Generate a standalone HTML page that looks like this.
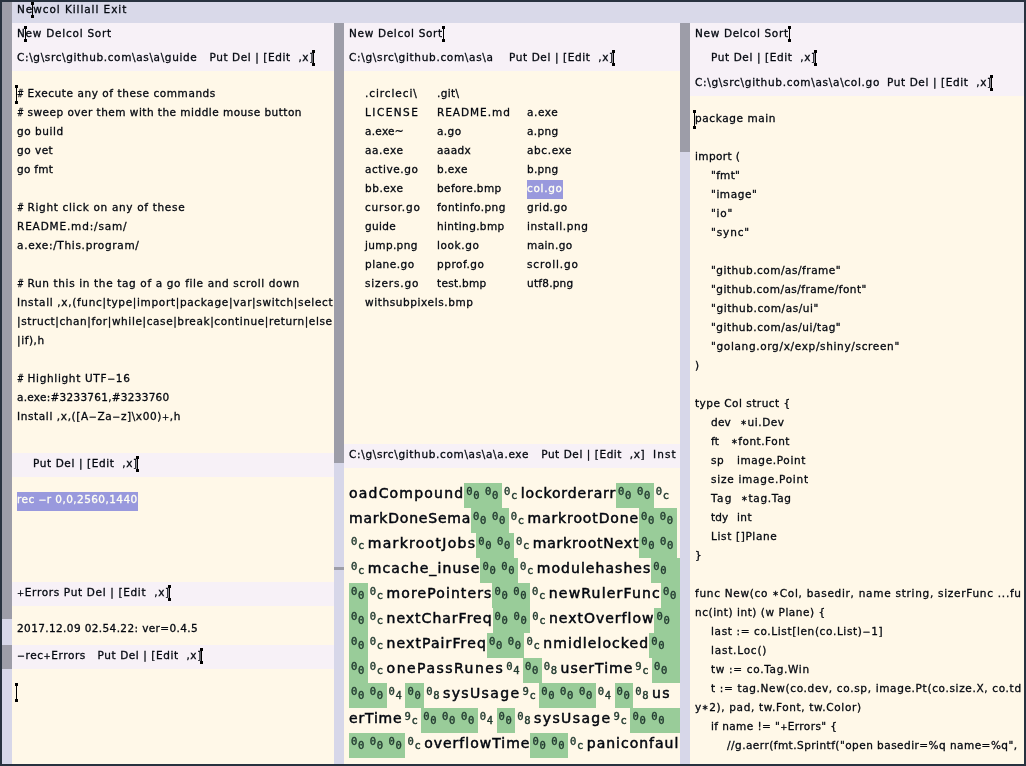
<!DOCTYPE html>
<html><head><meta charset="utf-8"><title>a</title>
<style>
html,body{margin:0;padding:0}
body{width:1026px;height:766px;overflow:hidden;background:#28323f;position:relative;font-family:'DejaVu Sans','Liberation Sans',sans-serif;color:#03070f}
#w{position:absolute;left:0;top:0;width:1024px;height:764px;overflow:hidden;will-change:transform}
.r{position:absolute}
.t{position:absolute;white-space:pre;font-size:10.5px;line-height:19px;height:19px;-webkit-text-stroke:0.3px}
.w{color:#fffff4}
.hash{transform:scaleX(.78);transform-origin:0 0}
.b{position:absolute;white-space:pre;font-size:14px;line-height:25px;height:25px;margin-top:-2px;-webkit-text-stroke:0.5px #03070f}
.h{position:absolute;width:18.8px;height:25px;font-family:'DejaVu Sans Mono','Liberation Mono',monospace;font-size:10.5px;color:#223a30;-webkit-text-stroke:0.4px}
.h i{position:absolute;font-style:normal;line-height:10px}
.h i.u{left:2px;top:3px} .h i.l{left:9px;top:7px}
.a{font-size:8px;position:relative;top:-1.3px}.p{font-size:8.5px;position:relative;top:-0.4px}.m{font-size:9.5px;position:relative;top:-0.2px}
.g{background:#99cc99}
.c{position:absolute;width:1px;background:#000}
.c:before,.c:after{content:"";position:absolute;left:-1px;width:3px;height:3px;background:#000}
.c:before{top:0} .c:after{bottom:0}
</style></head><body><div id="w">
<div class="r" style="left:2px;top:2px;width:1022px;height:21px;background:#d9d9e9"></div>
<div class="r" style="left:2px;top:2px;width:10px;height:617px;background:#9d9da8"></div>
<div class="r" style="left:2px;top:619px;width:10px;height:26px;background:#d7d7e9"></div>
<div class="r" style="left:2px;top:645px;width:10px;height:24px;background:#9d9da8"></div>
<div class="r" style="left:2px;top:669px;width:10px;height:95px;background:#d7d7e9"></div>
<div class="r" style="left:12px;top:23px;width:322px;height:48px;background:#f7f1f7"></div>
<div class="r" style="left:12px;top:71px;width:322px;height:382px;background:#fff8e8"></div>
<div class="r" style="left:12px;top:453px;width:322px;height:24px;background:#f7f1f7"></div>
<div class="r" style="left:12px;top:477px;width:322px;height:105px;background:#fff8e8"></div>
<div class="r" style="left:12px;top:582px;width:322px;height:24px;background:#f7f1f7"></div>
<div class="r" style="left:12px;top:606px;width:322px;height:39px;background:#fff8e8"></div>
<div class="r" style="left:12px;top:645px;width:322px;height:24px;background:#f7f1f7"></div>
<div class="r" style="left:12px;top:669px;width:322px;height:95px;background:#fff8e8"></div>
<div class="r" style="left:334px;top:23px;width:10px;height:440px;background:#9d9da8"></div>
<div class="r" style="left:334px;top:463px;width:10px;height:301px;background:#d7d7e9"></div>
<div class="r" style="left:334px;top:567px;width:10px;height:3px;background:#9d9da8"></div>
<div class="r" style="left:344px;top:23px;width:336px;height:48px;background:#f7f1f7"></div>
<div class="r" style="left:344px;top:71px;width:336px;height:373px;background:#fff8e8"></div>
<div class="r" style="left:344px;top:444px;width:336px;height:24px;background:#f7f1f7"></div>
<div class="r" style="left:344px;top:468px;width:336px;height:296px;background:#fff8e8"></div>
<div class="r" style="left:680px;top:23px;width:10px;height:129px;background:#9d9da8"></div>
<div class="r" style="left:680px;top:152px;width:10px;height:612px;background:#d7d7e9"></div>
<div class="r" style="left:690px;top:23px;width:334px;height:73px;background:#f7f1f7"></div>
<div class="r" style="left:690px;top:96px;width:334px;height:668px;background:#fff8e8"></div>
<div class="r" style="left:17px;top:492px;width:121px;height:19px;background:#9999dd"></div>
<div class="r" style="left:527px;top:180px;width:36px;height:19px;background:#9999dd"></div>
<div class="r g" style="left:464.3px;top:483px;width:18.8px;height:25px"></div>
<div class="r g" style="left:483.1px;top:483px;width:18.8px;height:25px"></div>
<div class="r g" style="left:616.1px;top:483px;width:18.8px;height:25px"></div>
<div class="r g" style="left:634.9px;top:483px;width:18.8px;height:25px"></div>
<div class="r g" style="left:471.1px;top:508px;width:18.8px;height:25px"></div>
<div class="r g" style="left:489.9px;top:508px;width:18.8px;height:25px"></div>
<div class="r g" style="left:639.0px;top:508px;width:18.8px;height:25px"></div>
<div class="r g" style="left:657.8px;top:508px;width:18.8px;height:25px"></div>
<div class="r g" style="left:476.3px;top:533px;width:18.8px;height:25px"></div>
<div class="r g" style="left:495.1px;top:533px;width:18.8px;height:25px"></div>
<div class="r g" style="left:639.2px;top:533px;width:18.8px;height:25px"></div>
<div class="r g" style="left:658.0px;top:533px;width:18.8px;height:25px"></div>
<div class="r g" style="left:480.4px;top:558px;width:18.8px;height:25px"></div>
<div class="r g" style="left:499.2px;top:558px;width:18.8px;height:25px"></div>
<div class="r g" style="left:651.3px;top:558px;width:28.7px;height:25px"></div>
<div class="r g" style="left:349.0px;top:583px;width:18.8px;height:25px"></div>
<div class="r g" style="left:492.4px;top:583px;width:18.8px;height:25px"></div>
<div class="r g" style="left:511.2px;top:583px;width:18.8px;height:25px"></div>
<div class="r g" style="left:661.0px;top:583px;width:19.0px;height:25px"></div>
<div class="r g" style="left:349.0px;top:608px;width:18.8px;height:25px"></div>
<div class="r g" style="left:492.6px;top:608px;width:18.8px;height:25px"></div>
<div class="r g" style="left:511.4px;top:608px;width:18.8px;height:25px"></div>
<div class="r g" style="left:654.4px;top:608px;width:25.6px;height:25px"></div>
<div class="r g" style="left:349.0px;top:633px;width:18.8px;height:25px"></div>
<div class="r g" style="left:486.9px;top:633px;width:18.8px;height:25px"></div>
<div class="r g" style="left:505.7px;top:633px;width:18.8px;height:25px"></div>
<div class="r g" style="left:649.2px;top:633px;width:30.8px;height:25px"></div>
<div class="r g" style="left:349.0px;top:658px;width:18.8px;height:25px"></div>
<div class="r g" style="left:523.0px;top:658px;width:18.8px;height:25px"></div>
<div class="r g" style="left:652.1px;top:658px;width:27.9px;height:25px"></div>
<div class="r g" style="left:349.0px;top:683px;width:18.8px;height:25px"></div>
<div class="r g" style="left:367.8px;top:683px;width:18.8px;height:25px"></div>
<div class="r g" style="left:405.4px;top:683px;width:18.8px;height:25px"></div>
<div class="r g" style="left:539.3px;top:683px;width:18.8px;height:25px"></div>
<div class="r g" style="left:558.1px;top:683px;width:18.8px;height:25px"></div>
<div class="r g" style="left:576.9px;top:683px;width:18.8px;height:25px"></div>
<div class="r g" style="left:614.5px;top:683px;width:18.8px;height:25px"></div>
<div class="r g" style="left:421.3px;top:708px;width:18.8px;height:25px"></div>
<div class="r g" style="left:440.1px;top:708px;width:18.8px;height:25px"></div>
<div class="r g" style="left:458.9px;top:708px;width:18.8px;height:25px"></div>
<div class="r g" style="left:496.5px;top:708px;width:18.8px;height:25px"></div>
<div class="r g" style="left:630.4px;top:708px;width:18.8px;height:25px"></div>
<div class="r g" style="left:649.2px;top:708px;width:30.8px;height:25px"></div>
<div class="r g" style="left:349.0px;top:733px;width:18.8px;height:25px"></div>
<div class="r g" style="left:367.8px;top:733px;width:18.8px;height:25px"></div>
<div class="r g" style="left:386.6px;top:733px;width:18.8px;height:25px"></div>
<div class="r g" style="left:530.4px;top:733px;width:18.8px;height:25px"></div>
<div class="r g" style="left:549.2px;top:733px;width:18.8px;height:25px"></div>
<div class="t " style="left:17px;top:0px;letter-spacing:0.932px">Newcol Killall Exit</div>
<div class="t " style="left:17px;top:24px;letter-spacing:0.754px">New Delcol Sort</div>
<div class="t " style="left:17px;top:48px;letter-spacing:0.639px">C:\g\src\github.com\as\a\guide</div>
<div class="t " style="left:209.5px;top:48px;letter-spacing:0.581px">Put Del | [Edit  ,x]</div>
<div class="t hash" style="left:17px;top:84px;letter-spacing:0.3px">#</div>
<div class="t " style="left:27.5px;top:84px;letter-spacing:0.572px">Execute any of these commands</div>
<div class="t hash" style="left:17px;top:103px;letter-spacing:0.3px">#</div>
<div class="t " style="left:27.5px;top:103px;letter-spacing:0.486px">sweep over them with the middle mouse button</div>
<div class="t " style="left:17px;top:122px;letter-spacing:0.544px">go build</div>
<div class="t " style="left:17px;top:141px;letter-spacing:0.497px">go vet</div>
<div class="t " style="left:17px;top:160px;letter-spacing:0.289px">go fmt</div>
<div class="t hash" style="left:17px;top:198px;letter-spacing:0.3px">#</div>
<div class="t " style="left:27.5px;top:198px;letter-spacing:0.679px">Right click on any of these</div>
<div class="t " style="left:17px;top:217px;letter-spacing:0.842px">README.md:/sam/</div>
<div class="t " style="left:17px;top:236px;letter-spacing:0.699px">a.exe:/This.program/</div>
<div class="t hash" style="left:17px;top:274px;letter-spacing:0.3px">#</div>
<div class="t " style="left:27.5px;top:274px;letter-spacing:0.643px">Run this in the tag of a go file and scroll down</div>
<div class="t " style="left:17px;top:293px;letter-spacing:0.671px">Install ,x,(func|type|import|package|var|switch|select</div>
<div class="t " style="left:17px;top:312px;letter-spacing:0.609px">|struct|chan|for|while|case|break|continue|return|else</div>
<div class="t " style="left:17px;top:331px;letter-spacing:0.592px">|if),h</div>
<div class="t hash" style="left:17px;top:369px;letter-spacing:0.3px">#</div>
<div class="t " style="left:27.5px;top:369px;letter-spacing:0.673px">Highlight UTF<span class="m">−</span>16</div>
<div class="t " style="left:17px;top:388px;letter-spacing:0.265px">a.exe:#3233761,#3233760</div>
<div class="t " style="left:17px;top:407px;letter-spacing:0.616px">Install ,x,([A<span class="m">−</span>Za<span class="m">−</span>z]\x00)<span class="p">+</span>,h</div>
<div class="t " style="left:33px;top:454px;letter-spacing:0.606px">Put Del | [Edit  ,x]</div>
<div class="t w" style="left:17px;top:490px;letter-spacing:0.429px">rec <span class="m">−</span>r 0,0,2560,1440</div>
<div class="t " style="left:17px;top:583px;letter-spacing:0.664px"><span class="p">+</span>Errors Put Del | [Edit  ,x]</div>
<div class="t " style="left:17px;top:619px;letter-spacing:0.383px">2017.12.09 02.54.22: ver=0.4.5</div>
<div class="t " style="left:17px;top:646px;letter-spacing:0.577px"><span class="m">−</span>rec<span class="p">+</span>Errors   Put Del | [Edit  ,x]</div>
<div class="t " style="left:349px;top:24px;letter-spacing:0.681px">New Delcol Sort</div>
<div class="t " style="left:349px;top:48px;letter-spacing:0.682px">C:\g\src\github.com\as\a</div>
<div class="t " style="left:509px;top:48px;letter-spacing:0.606px">Put Del | [Edit  ,x]</div>
<div class="t " style="left:365px;top:84px;letter-spacing:0.918px">.circleci\</div>
<div class="t " style="left:437px;top:84px;letter-spacing:0.372px">.git\</div>
<div class="t " style="left:365px;top:103px;letter-spacing:1.467px">LICENSE</div>
<div class="t " style="left:437px;top:103px;letter-spacing:0.965px">README.md</div>
<div class="t " style="left:527px;top:103px;letter-spacing:0.601px">a.exe</div>
<div class="t " style="left:365px;top:122px;letter-spacing:0.283px">a.exe~</div>
<div class="t " style="left:437px;top:122px;letter-spacing:0.413px">a.go</div>
<div class="t " style="left:527px;top:122px;letter-spacing:0.329px">a.png</div>
<div class="t " style="left:365px;top:141px;letter-spacing:0.606px">aa.exe</div>
<div class="t " style="left:437px;top:141px;letter-spacing:0.389px">aaadx</div>
<div class="t " style="left:527px;top:141px;letter-spacing:0.621px">abc.exe</div>
<div class="t " style="left:365px;top:160px;letter-spacing:0.575px">active.go</div>
<div class="t " style="left:437px;top:160px;letter-spacing:0.430px">b.exe</div>
<div class="t " style="left:527px;top:160px;letter-spacing:0.283px">b.png</div>
<div class="t " style="left:365px;top:179px;letter-spacing:0.531px">bb.exe</div>
<div class="t " style="left:437px;top:179px;letter-spacing:0.392px">before.bmp</div>
<div class="t w" style="left:527px;top:179px;letter-spacing:0.674px">col.go</div>
<div class="t " style="left:365px;top:198px;letter-spacing:0.798px">cursor.go</div>
<div class="t " style="left:437px;top:198px;letter-spacing:0.422px">fontinfo.png</div>
<div class="t " style="left:527px;top:198px;letter-spacing:0.514px">grid.go</div>
<div class="t " style="left:365px;top:217px;letter-spacing:0.318px">guide</div>
<div class="t " style="left:437px;top:217px;letter-spacing:0.369px">hinting.bmp</div>
<div class="t " style="left:527px;top:217px;letter-spacing:0.610px">install.png</div>
<div class="t " style="left:365px;top:236px;letter-spacing:0.360px">jump.png</div>
<div class="t " style="left:437px;top:236px;letter-spacing:0.601px">look.go</div>
<div class="t " style="left:527px;top:236px;letter-spacing:0.420px">main.go</div>
<div class="t " style="left:365px;top:255px;letter-spacing:0.524px">plane.go</div>
<div class="t " style="left:437px;top:255px;letter-spacing:0.537px">pprof.go</div>
<div class="t " style="left:527px;top:255px;letter-spacing:0.873px">scroll.go</div>
<div class="t " style="left:365px;top:274px;letter-spacing:0.864px">sizers.go</div>
<div class="t " style="left:437px;top:274px;letter-spacing:0.315px">test.bmp</div>
<div class="t " style="left:527px;top:274px;letter-spacing:0.245px">utf8.png</div>
<div class="t " style="left:365px;top:293px;letter-spacing:0.608px">withsubpixels.bmp</div>
<div class="t " style="left:349px;top:445px;letter-spacing:0.658px">C:\g\src\github.com\as\a\a.exe</div>
<div class="t " style="left:541.2px;top:445px;letter-spacing:0.566px">Put Del | [Edit  ,x]</div>
<div class="t " style="left:653px;top:445px;letter-spacing:1.089px">Inst</div>
<div class="t " style="left:695px;top:24px;letter-spacing:0.667px">New Delcol Sort</div>
<div class="t " style="left:711px;top:48px;letter-spacing:0.606px">Put Del | [Edit  ,x]</div>
<div class="t " style="left:695px;top:73px;letter-spacing:0.700px">C:\g\src\github.com\as\a\col.go</div>
<div class="t " style="left:887px;top:73px;letter-spacing:0.606px">Put Del | [Edit  ,x]</div>
<div class="t " style="left:695px;top:109px;letter-spacing:0.591px">package main</div>
<div class="t " style="left:695px;top:147px;letter-spacing:0.386px">import (</div>
<div class="t " style="left:711px;top:166px;letter-spacing:0.299px">"fmt"</div>
<div class="t " style="left:711px;top:185px;letter-spacing:0.561px">"image"</div>
<div class="t " style="left:711px;top:204px;letter-spacing:0.746px">"io"</div>
<div class="t " style="left:711px;top:223px;letter-spacing:0.886px">"sync"</div>
<div class="t " style="left:711px;top:261px;letter-spacing:0.523px">"github.com/as/frame"</div>
<div class="t " style="left:711px;top:280px;letter-spacing:0.467px">"github.com/as/frame/font"</div>
<div class="t " style="left:711px;top:299px;letter-spacing:0.575px">"github.com/as/ui"</div>
<div class="t " style="left:711px;top:318px;letter-spacing:0.536px">"github.com/as/ui/tag"</div>
<div class="t " style="left:711px;top:337px;letter-spacing:0.664px">"golang.org/x/exp/shiny/screen"</div>
<div class="t " style="left:695px;top:356px;letter-spacing:0.191px">)</div>
<div class="t " style="left:695px;top:394px;letter-spacing:0.495px">type Col struct {</div>
<div class="t " style="left:711px;top:413px;letter-spacing:0.219px">dev</div>
<div class="t " style="left:740.3px;top:413px;letter-spacing:0.561px"><span class="a">∗</span>ui.Dev</div>
<div class="t " style="left:711px;top:432px;letter-spacing:0.180px">ft</div>
<div class="t " style="left:731.1px;top:432px;letter-spacing:0.510px"><span class="a">∗</span>font.Font</div>
<div class="t " style="left:711px;top:451px;letter-spacing:0.530px">sp</div>
<div class="t " style="left:736.9px;top:451px;letter-spacing:0.634px">image.Point</div>
<div class="t " style="left:711px;top:470px;letter-spacing:0.749px">size image.Point</div>
<div class="t " style="left:711px;top:489px;letter-spacing:1.306px">Tag</div>
<div class="t " style="left:741px;top:489px;letter-spacing:0.707px"><span class="a">∗</span>tag.Tag</div>
<div class="t " style="left:711px;top:508px;letter-spacing:0.100px">tdy</div>
<div class="t " style="left:736.9px;top:508px;letter-spacing:0.499px">int</div>
<div class="t " style="left:711px;top:527px;letter-spacing:0.643px">List []Plane</div>
<div class="t " style="left:695px;top:546px;letter-spacing:-2.087px">}</div>
<div class="t " style="left:695px;top:584px;letter-spacing:0.719px">func New(co <span class="a">∗</span>Col, basedir, name string, sizerFunc ...fu</div>
<div class="t " style="left:695px;top:603px;letter-spacing:0.545px">nc(int) int) (w Plane) {</div>
<div class="t " style="left:711px;top:622px;letter-spacing:0.637px">last := co.List[len(co.List)<span class="m">−</span>1]</div>
<div class="t " style="left:711px;top:641px;letter-spacing:0.786px">last.Loc()</div>
<div class="t " style="left:711px;top:660px;letter-spacing:0.681px">tw := co.Tag.Win</div>
<div class="t " style="left:711px;top:679px;letter-spacing:0.658px">t := tag.New(co.dev, co.sp, image.Pt(co.size.X, co.td</div>
<div class="t " style="left:695px;top:698px;letter-spacing:0.644px">y<span class="a">∗</span>2), pad, tw.Font, tw.Color)</div>
<div class="t " style="left:711px;top:717px;letter-spacing:0.414px">if name != "<span class="p">+</span>Errors" {</div>
<div class="t " style="left:727px;top:736px;letter-spacing:0.470px">//g.aerr(fmt.Sprintf("open basedir=%q name=%q",</div>
<div class="b" style="left:349.0px;top:483px;letter-spacing:1.199px">oadCompound</div>
<div class="h" style="left:464.3px;top:483px"><i class="u">0</i><i class="l">0</i></div>
<div class="h" style="left:483.1px;top:483px"><i class="u">0</i><i class="l">0</i></div>
<div class="h" style="left:501.9px;top:483px"><i class="u">0</i><i class="l">c</i></div>
<div class="b" style="left:520.7px;top:483px;letter-spacing:0.872px">lockorderarr</div>
<div class="h" style="left:616.1px;top:483px"><i class="u">0</i><i class="l">0</i></div>
<div class="h" style="left:634.9px;top:483px"><i class="u">0</i><i class="l">0</i></div>
<div class="h" style="left:653.7px;top:483px"><i class="u">0</i><i class="l">c</i></div>
<div class="b" style="left:349.0px;top:508px;letter-spacing:0.788px">markDoneSema</div>
<div class="h" style="left:471.1px;top:508px"><i class="u">0</i><i class="l">0</i></div>
<div class="h" style="left:489.9px;top:508px"><i class="u">0</i><i class="l">0</i></div>
<div class="h" style="left:508.7px;top:508px"><i class="u">0</i><i class="l">c</i></div>
<div class="b" style="left:527.5px;top:508px;letter-spacing:0.876px">markrootDone</div>
<div class="h" style="left:639.0px;top:508px"><i class="u">0</i><i class="l">0</i></div>
<div class="h" style="left:657.8px;top:508px"><i class="u">0</i><i class="l">0</i></div>
<div class="h" style="left:349.0px;top:533px"><i class="u">0</i><i class="l">c</i></div>
<div class="b" style="left:367.8px;top:533px;letter-spacing:1.289px">markrootJobs</div>
<div class="h" style="left:476.3px;top:533px"><i class="u">0</i><i class="l">0</i></div>
<div class="h" style="left:495.1px;top:533px"><i class="u">0</i><i class="l">0</i></div>
<div class="h" style="left:513.9px;top:533px"><i class="u">0</i><i class="l">c</i></div>
<div class="b" style="left:532.7px;top:533px;letter-spacing:0.811px">markrootNext</div>
<div class="h" style="left:639.2px;top:533px"><i class="u">0</i><i class="l">0</i></div>
<div class="h" style="left:658.0px;top:533px"><i class="u">0</i><i class="l">0</i></div>
<div class="h" style="left:349.0px;top:558px"><i class="u">0</i><i class="l">c</i></div>
<div class="b" style="left:367.8px;top:558px;letter-spacing:1.080px">mcache_inuse</div>
<div class="h" style="left:480.4px;top:558px"><i class="u">0</i><i class="l">0</i></div>
<div class="h" style="left:499.2px;top:558px"><i class="u">0</i><i class="l">0</i></div>
<div class="h" style="left:518.0px;top:558px"><i class="u">0</i><i class="l">c</i></div>
<div class="b" style="left:536.8px;top:558px;letter-spacing:1.042px">modulehashes</div>
<div class="h" style="left:651.3px;top:558px"><i class="u">0</i><i class="l">0</i></div>
<div class="h" style="left:349.0px;top:583px"><i class="u">0</i><i class="l">0</i></div>
<div class="h" style="left:367.8px;top:583px"><i class="u">0</i><i class="l">c</i></div>
<div class="b" style="left:386.6px;top:583px;letter-spacing:1.091px">morePointers</div>
<div class="h" style="left:492.4px;top:583px"><i class="u">0</i><i class="l">0</i></div>
<div class="h" style="left:511.2px;top:583px"><i class="u">0</i><i class="l">0</i></div>
<div class="h" style="left:530.0px;top:583px"><i class="u">0</i><i class="l">c</i></div>
<div class="b" style="left:548.8px;top:583px;letter-spacing:1.191px">newRulerFunc</div>
<div class="h" style="left:661.0px;top:583px"><i class="u">0</i><i class="l">0</i></div>
<div class="h" style="left:349.0px;top:608px"><i class="u">0</i><i class="l">0</i></div>
<div class="h" style="left:367.8px;top:608px"><i class="u">0</i><i class="l">c</i></div>
<div class="b" style="left:386.6px;top:608px;letter-spacing:1.001px">nextCharFreq</div>
<div class="h" style="left:492.6px;top:608px"><i class="u">0</i><i class="l">0</i></div>
<div class="h" style="left:511.4px;top:608px"><i class="u">0</i><i class="l">0</i></div>
<div class="h" style="left:530.2px;top:608px"><i class="u">0</i><i class="l">c</i></div>
<div class="b" style="left:549.0px;top:608px;letter-spacing:0.989px">nextOverflow</div>
<div class="h" style="left:654.4px;top:608px"><i class="u">0</i><i class="l">0</i></div>
<div class="h" style="left:349.0px;top:633px"><i class="u">0</i><i class="l">0</i></div>
<div class="h" style="left:367.8px;top:633px"><i class="u">0</i><i class="l">c</i></div>
<div class="b" style="left:386.6px;top:633px;letter-spacing:1.104px">nextPairFreq</div>
<div class="h" style="left:486.9px;top:633px"><i class="u">0</i><i class="l">0</i></div>
<div class="h" style="left:505.7px;top:633px"><i class="u">0</i><i class="l">0</i></div>
<div class="h" style="left:524.5px;top:633px"><i class="u">0</i><i class="l">c</i></div>
<div class="b" style="left:543.3px;top:633px;letter-spacing:1.070px">nmidlelocked</div>
<div class="h" style="left:649.2px;top:633px"><i class="u">0</i><i class="l">0</i></div>
<div class="h" style="left:349.0px;top:658px"><i class="u">0</i><i class="l">0</i></div>
<div class="h" style="left:367.8px;top:658px"><i class="u">0</i><i class="l">c</i></div>
<div class="b" style="left:386.6px;top:658px;letter-spacing:1.484px">onePassRunes</div>
<div class="h" style="left:504.2px;top:658px"><i class="u">0</i><i class="l">4</i></div>
<div class="h" style="left:523.0px;top:658px"><i class="u">0</i><i class="l">0</i></div>
<div class="h" style="left:541.8px;top:658px"><i class="u">0</i><i class="l">8</i></div>
<div class="b" style="left:560.6px;top:658px;letter-spacing:0.986px">userTime</div>
<div class="h" style="left:633.3px;top:658px"><i class="u">9</i><i class="l">c</i></div>
<div class="h" style="left:652.1px;top:658px"><i class="u">0</i><i class="l">0</i></div>
<div class="h" style="left:349.0px;top:683px"><i class="u">0</i><i class="l">0</i></div>
<div class="h" style="left:367.8px;top:683px"><i class="u">0</i><i class="l">0</i></div>
<div class="h" style="left:386.6px;top:683px"><i class="u">0</i><i class="l">4</i></div>
<div class="h" style="left:405.4px;top:683px"><i class="u">0</i><i class="l">0</i></div>
<div class="h" style="left:424.2px;top:683px"><i class="u">0</i><i class="l">8</i></div>
<div class="b" style="left:443.0px;top:683px;letter-spacing:1.375px">sysUsage</div>
<div class="h" style="left:520.5px;top:683px"><i class="u">9</i><i class="l">c</i></div>
<div class="h" style="left:539.3px;top:683px"><i class="u">0</i><i class="l">0</i></div>
<div class="h" style="left:558.1px;top:683px"><i class="u">0</i><i class="l">0</i></div>
<div class="h" style="left:576.9px;top:683px"><i class="u">0</i><i class="l">0</i></div>
<div class="h" style="left:595.7px;top:683px"><i class="u">0</i><i class="l">4</i></div>
<div class="h" style="left:614.5px;top:683px"><i class="u">0</i><i class="l">0</i></div>
<div class="h" style="left:633.3px;top:683px"><i class="u">0</i><i class="l">8</i></div>
<div class="b" style="left:652.1px;top:683px;letter-spacing:1.364px">us</div>
<div class="b" style="left:349.0px;top:708px;letter-spacing:0.810px">erTime</div>
<div class="h" style="left:402.5px;top:708px"><i class="u">9</i><i class="l">c</i></div>
<div class="h" style="left:421.3px;top:708px"><i class="u">0</i><i class="l">0</i></div>
<div class="h" style="left:440.1px;top:708px"><i class="u">0</i><i class="l">0</i></div>
<div class="h" style="left:458.9px;top:708px"><i class="u">0</i><i class="l">0</i></div>
<div class="h" style="left:477.7px;top:708px"><i class="u">0</i><i class="l">4</i></div>
<div class="h" style="left:496.5px;top:708px"><i class="u">0</i><i class="l">0</i></div>
<div class="h" style="left:515.3px;top:708px"><i class="u">0</i><i class="l">8</i></div>
<div class="b" style="left:534.1px;top:708px;letter-spacing:1.375px">sysUsage</div>
<div class="h" style="left:611.6px;top:708px"><i class="u">9</i><i class="l">c</i></div>
<div class="h" style="left:630.4px;top:708px"><i class="u">0</i><i class="l">0</i></div>
<div class="h" style="left:649.2px;top:708px"><i class="u">0</i><i class="l">0</i></div>
<div class="h" style="left:349.0px;top:733px"><i class="u">0</i><i class="l">0</i></div>
<div class="h" style="left:367.8px;top:733px"><i class="u">0</i><i class="l">0</i></div>
<div class="h" style="left:386.6px;top:733px"><i class="u">0</i><i class="l">0</i></div>
<div class="h" style="left:405.4px;top:733px"><i class="u">0</i><i class="l">c</i></div>
<div class="b" style="left:424.2px;top:733px;letter-spacing:0.989px">overflowTime</div>
<div class="h" style="left:530.4px;top:733px"><i class="u">0</i><i class="l">0</i></div>
<div class="h" style="left:549.2px;top:733px"><i class="u">0</i><i class="l">0</i></div>
<div class="h" style="left:568.0px;top:733px"><i class="u">0</i><i class="l">c</i></div>
<div class="b" style="left:586.8px;top:733px;letter-spacing:0.987px">paniconfaul</div>
<div class="c" style="left:32px;top:2px;height:16px"></div>
<div class="c" style="left:25px;top:26px;height:16px"></div>
<div class="c" style="left:313px;top:50px;height:16px"></div>
<div class="c" style="left:16px;top:85px;height:19px"></div>
<div class="c" style="left:137px;top:456px;height:16px"></div>
<div class="c" style="left:169px;top:585px;height:16px"></div>
<div class="c" style="left:201px;top:648px;height:16px"></div>
<div class="c" style="left:16px;top:683px;height:19px"></div>
<div class="c" style="left:443px;top:26px;height:16px"></div>
<div class="c" style="left:613px;top:50px;height:16px"></div>
<div class="c" style="left:789px;top:26px;height:16px"></div>
<div class="c" style="left:815px;top:50px;height:16px"></div>
<div class="c" style="left:991px;top:75px;height:16px"></div>
<div class="c" style="left:694px;top:110px;height:19px"></div>
</div></body></html>
